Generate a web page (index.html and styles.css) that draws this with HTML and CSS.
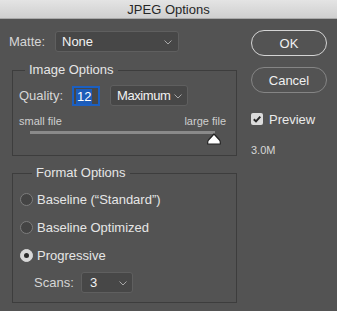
FILE: index.html
```html
<!DOCTYPE html>
<html>
<head>
<meta charset="utf-8">
<link rel="stylesheet" href="styles.css">
</head>
<body>
<div class="window">
  <div class="titlebar">JPEG Options</div>
  <div class="content">
    <div class="left">
      <div class="row matte-row">
        <span class="label matte-label">Matte:</span>
        <div class="select select-matte"><span>None</span><svg class="chev" width="8" height="5" viewBox="0 0 8 5"><path d="M0.5 0.5 L4 4 L7.5 0.5" fill="none" stroke="#a8a8a8" stroke-width="1"/></svg></div>
      </div>
      <fieldset class="group group-image">
        <legend>Image Options</legend>
        <div class="row quality-row">
          <span class="label quality-label">Quality:</span>
          <div class="num-input"><span class="sel">12</span></div>
          <div class="select select-quality"><span class="tight">Maximum</span><svg class="chev" width="8" height="5" viewBox="0 0 8 5"><path d="M0.5 0.5 L4 4 L7.5 0.5" fill="none" stroke="#a8a8a8" stroke-width="1"/></svg></div>
        </div>
        <div class="slider-labels"><span>small file</span><span>large file</span></div>
        <div class="track">
          <svg class="thumb" width="14" height="12" viewBox="0 0 14 12"><path d="M7 1 L12.5 7 Q13.3 8 13.3 9.5 L13.3 11 L0.7 11 L0.7 9.5 Q0.7 8 1.5 7 Z" fill="#ffffff" stroke="#222" stroke-width="1.2" stroke-linejoin="round"/></svg>
        </div>
      </fieldset>
      <fieldset class="group group-format">
        <legend>Format Options</legend>
        <div class="radio-row first"><span class="radio"></span><span>Baseline (“Standard”)</span></div>
        <div class="radio-row"><span class="radio"></span><span>Baseline Optimized</span></div>
        <div class="radio-row"><span class="radio checked"></span><span>Progressive</span></div>
        <div class="row scans-row">
          <span class="label scans-label">Scans:</span>
          <div class="select select-scans"><span>3</span><svg class="chev" width="8" height="5" viewBox="0 0 8 5"><path d="M0.5 0.5 L4 4 L7.5 0.5" fill="none" stroke="#a8a8a8" stroke-width="1"/></svg></div>
        </div>
      </fieldset>
    </div>
    <div class="right">
      <div class="btn btn-ok">OK</div>
      <div class="btn btn-cancel">Cancel</div>
      <div class="check-row"><span class="checkbox"><svg width="12" height="12" viewBox="0 0 12 12"><path d="M2.8 6.2 L5 8.4 L9.3 3.6" fill="none" stroke="#2a2a2a" stroke-width="2"/></svg></span><span>Preview</span></div>
      <div class="size">3.0M</div>
    </div>
  </div>
</div>
</body>
</html>
```
FILE: styles.css
```css
html, body {
  margin: 0;
  padding: 0;
  background: #535353;
}
body {
  font-family: "Liberation Sans", Arial, sans-serif;
  font-size: 13px;
  color: #e2e2e2;
  width: 337px;
  height: 311px;
  overflow: hidden;
}
.window {
  display: flex;
  flex-direction: column;
  height: 311px;
}
.titlebar {
  height: 19px;
  line-height: 19px;
  text-align: center;
  color: #262626;
  background: linear-gradient(#e4e4e4, #cfcfcf);
  border-bottom: 1px solid #a9a9a9;
  box-sizing: border-box;
}
.content {
  display: flex;
}
.left {
  width: 237px;
  display: flex;
  flex-direction: column;
}
.row {
  display: flex;
  align-items: center;
}
.label {
  color: #d6d6d6;
}
.matte-row {
  margin: 12px 0 0 9px;
  height: 21px;
}
.matte-label {
  width: 46px;
}
.select {
  box-sizing: border-box;
  flex-shrink: 0;
  height: 21px;
  background: #474747;
  border: 1px solid #5f5f5f;
  border-radius: 3px;
  display: flex;
  align-items: center;
  justify-content: space-between;
  color: #f2f2f2;
  font-size: 13px;
}
.select .chev {
  margin-top: 2px;
  flex-shrink: 0;
}
.select-matte {
  width: 124px;
  padding: 0 6px 0 6px;
}
.group {
  margin: 0 0 0 12px;
  width: 225px;
  box-sizing: border-box;
  border: 1px solid #3d3d3d;
  padding: 0 0 0 0;
  min-width: 0;
}
.group legend {
  margin-left: 12px;
  padding: 0 4px;
  line-height: 16px;
  color: #e6e6e6;
}
.group-image {
  margin-top: 10px;
  padding-bottom: 21px;
}
.quality-row {
  margin: 7px 0 0 6px;
  height: 21px;
}
.quality-label {
  width: 53px;
}
.num-input {
  box-sizing: border-box;
  flex-shrink: 0;
  width: 28px;
  height: 20px;
  border: 2px solid #1b5fc1;
  background: #474747;
  padding: 1px 0 0 2px;
  font-size: 13px;
  line-height: 15px;
}
.num-input .sel {
  background: #1d5cb8;
  color: #fff;
  display: inline-block;
  padding: 0 1px;
}
.select-quality {
  margin-left: 10px;
  width: 78px;
  padding: 0 5px 0 6px;
}
.tight {
  letter-spacing: -0.4px;
}
.slider-labels {
  display: flex;
  justify-content: space-between;
  font-size: 11px;
  line-height: 13px;
  color: #cfcfcf;
  margin: 9px 10px 0 6px;
}
.track {
  position: relative;
  margin: 3px 0 0 17px;
  width: 185px;
  height: 3px;
  background: #8a8a8a;
}
.thumb {
  position: absolute;
  left: 177px;
  top: 2px;
}
.group-format {
  margin-top: 9px;
  padding: 10px 0 9px 7px;
}
.radio-row {
  display: flex;
  align-items: center;
  height: 16px;
  margin-top: 12px;
  color: #e6e6e6;
}
.radio-row.first {
  margin-top: 0;
}
.radio {
  box-sizing: border-box;
  width: 13px;
  height: 13px;
  border-radius: 50%;
  border: 1px solid #7c7c7c;
  background: #444444;
  margin-right: 4px;
  display: flex;
  align-items: center;
  justify-content: center;
}
.radio.checked {
  background: #d9d9d9;
  border-color: #d9d9d9;
}
.radio.checked::after {
  content: "";
  width: 5px;
  height: 5px;
  border-radius: 50%;
  background: #2b2b2b;
}
.scans-row {
  margin: 9px 0 0 14px;
  height: 21px;
}
.scans-label {
  width: 47px;
}
.select-scans {
  width: 52px;
  padding: 0 5px 0 8px;
}
.right {
  display: flex;
  flex-direction: column;
  padding-left: 14px;
}
.btn {
  box-sizing: border-box;
  width: 76px;
  height: 26px;
  border-radius: 13px;
  display: flex;
  align-items: center;
  justify-content: center;
  color: #f0f0f0;
  font-size: 13px;
}
.btn-ok {
  margin-top: 11px;
  border: 1.5px solid #d4d4d4;
}
.btn-cancel {
  margin-top: 11px;
  border: 1px solid #858585;
}
.check-row {
  display: flex;
  align-items: center;
  margin-top: 20px;
  height: 12px;
  color: #eaeaea;
}
.checkbox {
  width: 12px;
  height: 12px;
  border-radius: 2px;
  background: #dcdcdc;
  margin-right: 6px;
  display: flex;
}
.size {
  margin-top: 19px;
  font-size: 11px;
  line-height: 13px;
  color: #d6d6d6;
}
```
